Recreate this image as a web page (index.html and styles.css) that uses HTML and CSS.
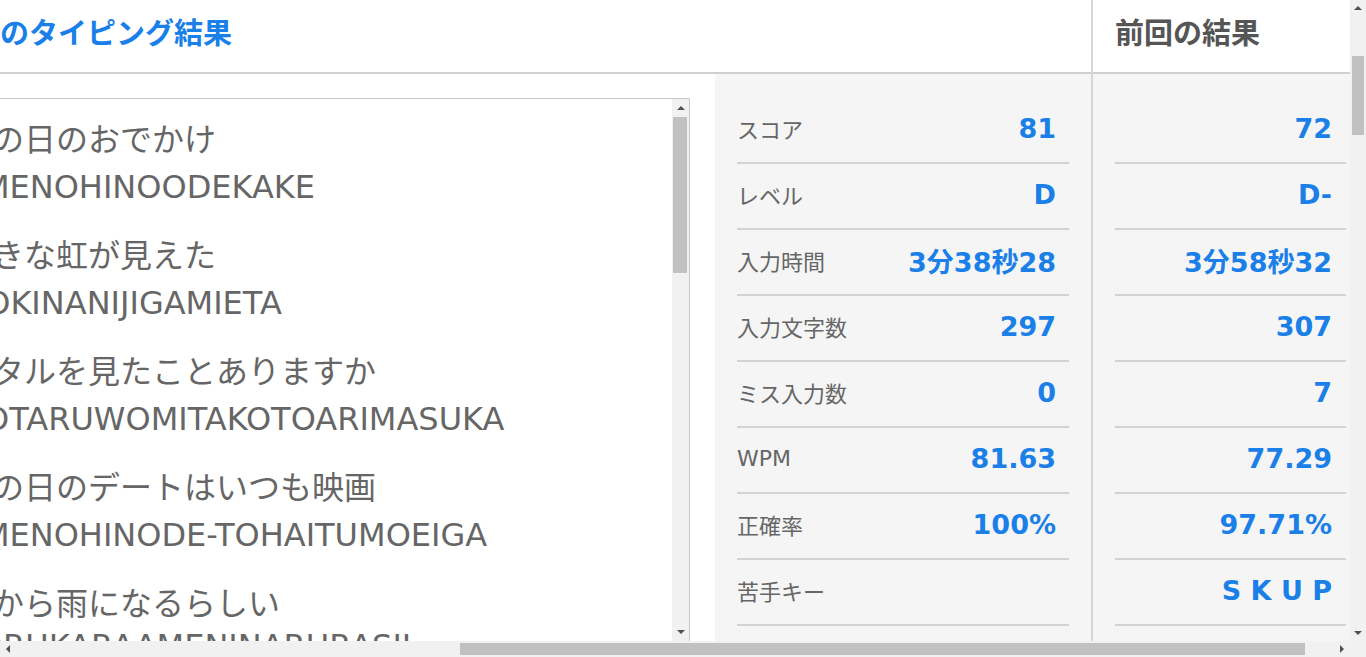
FILE: index.html
```html
<!DOCTYPE html>
<html>
  <head>
    <meta charset="UTF-8" />
    <title>タイピング結果</title>
    <link rel="stylesheet" href="styles.css">
  </head>

  <body>
    <div class="screen">
      <div class="viewport">
        <div class="result">
          <div class="today">
            <h2 class="col-title today-title">今日のタイピング結果</h2>
            <div class="today-body">
              <div class="sentence-wrap">
                <div class="sentence-box">
                  <div class="sentence-list">
                    <p class="sentence"><span class="kana">雨の日のおでかけ</span><span class="roma">AMENOHINOODEKAKE</span></p>
                    <p class="sentence"><span class="kana">大きな虹が見えた</span><span class="roma">OOKINANIJIGAMIETA</span></p>
                    <p class="sentence"><span class="kana">ホタルを見たことありますか</span><span class="roma">HOTARUWOMITAKOTOARIMASUKA</span></p>
                    <p class="sentence"><span class="kana">雨の日のデートはいつも映画</span><span class="roma">AMENOHINODE-TOHAITUMOEIGA</span></p>
                    <p class="sentence"><span class="kana">夜から雨になるらしい</span><span class="roma">YORUKARAAMENINARURASII</span></p>
                    <p class="sentence"><span class="kana">夏休みの宿題</span><span class="roma">NATUYASUMINOSYUKUDAI</span></p>
                  </div>
                  <div class="sb sb-v sb-box">
                    <span class="sb-btn"><i class="arrow arrow-up"></i></span>
                    <span class="sb-track"><span class="sb-thumb"></span></span>
                    <span class="sb-btn"><i class="arrow arrow-down"></i></span>
                  </div>
                </div>
              </div>
              <ul class="stats">
                <li class="stat"><span class="stat-label">スコア</span><span class="stat-value">81</span></li>
                <li class="stat"><span class="stat-label">レベル</span><span class="stat-value">D</span></li>
                <li class="stat"><span class="stat-label">入力時間</span><span class="stat-value">3分38秒28</span></li>
                <li class="stat"><span class="stat-label">入力文字数</span><span class="stat-value">297</span></li>
                <li class="stat"><span class="stat-label">ミス入力数</span><span class="stat-value">0</span></li>
                <li class="stat"><span class="stat-label">WPM</span><span class="stat-value">81.63</span></li>
                <li class="stat"><span class="stat-label">正確率</span><span class="stat-value">100%</span></li>
                <li class="stat"><span class="stat-label">苦手キー</span><span class="stat-value"></span></li>
                <li class="stat"><span class="stat-label">苦手な文字</span><span class="stat-value"></span></li>
              </ul>
            </div>
          </div>
          <div class="prev">
            <h2 class="col-title prev-title">前回の結果</h2>
            <ul class="stats">
              <li class="stat"><span class="stat-value">72</span></li>
              <li class="stat"><span class="stat-value">D-</span></li>
              <li class="stat"><span class="stat-value">3分58秒32</span></li>
              <li class="stat"><span class="stat-value">307</span></li>
              <li class="stat"><span class="stat-value">7</span></li>
              <li class="stat"><span class="stat-value">77.29</span></li>
              <li class="stat"><span class="stat-value">97.71%</span></li>
              <li class="stat"><span class="stat-value">S K U P</span></li>
              <li class="stat"><span class="stat-value"></span></li>
            </ul>
          </div>
        </div>
      </div>

      <!-- ページのスクロールバー -->
      <div class="sb sb-v sb-page">
        <span class="sb-btn"><i class="arrow arrow-up"></i></span>
        <span class="sb-track"><span class="sb-thumb"></span></span>
        <span class="sb-btn"><i class="arrow arrow-down"></i></span>
      </div>
      <div class="sb sb-h sb-page">
        <span class="sb-btn"><i class="arrow arrow-left"></i></span>
        <span class="sb-track"><span class="sb-thumb"></span></span>
        <span class="sb-btn"><i class="arrow arrow-right"></i></span>
      </div>
      <div class="sb-corner"></div>
    </div>
  </body>
</html>
```

FILE: styles.css
```css
html,
body {
  margin: 0;
  overflow: hidden;
}

body {
  font-family: "DejaVu Sans", "Noto Sans CJK JP", sans-serif;
  color: #666;
  background: #fff;
}

.screen {
  display: grid;
  grid-template-columns: 1350px 16px;
  grid-template-rows: 641px 16px;
}

.viewport {
  overflow: hidden;
}

.result {
  display: flex;
  margin-left: -78px;
  width: 1446px;
}

.today {
  width: 1171px;
  flex: none;
  box-sizing: border-box;
  border-right: 2px solid #d6d6d6;
}

.col-title {
  margin: 0;
  height: 74px;
  box-sizing: border-box;
  line-height: 62px;
  font-size: 29px;
  font-weight: bold;
  font-family: "Noto Sans CJK JP", sans-serif;
  border-bottom: 2px solid #d0d0d0;
}

.today-title {
  padding-left: 20px;
  color: #1a7fe8;
}

.prev-title {
  padding-left: 22px;
  color: #555;
}

.today-body {
  display: flex;
}

.sentence-wrap {
  width: 793px;
  box-sizing: border-box;
  padding: 24px 25px 0 18px;
}

.sentence-box {
  display: flex;
  height: 544px;
  box-sizing: border-box;
  border: 1px solid #c8c8c8;
}

.sentence-list {
  flex: 1;
  overflow: hidden;
  padding: 18px 0 0 19px;
}

.sentence {
  margin: 0 0 22px;
  font-size: 32px;
  line-height: 47px;
  white-space: nowrap;
}

.kana,
.roma {
  display: block;
}

.sentence:nth-child(n + 5) .roma {
  line-height: 36px;
}

.stats {
  list-style: none;
  margin: 0;
  padding: 24px 22px 22px;
  background: #f5f5f5;
  box-sizing: border-box;
}

.today-body .stats {
  width: 376px;
  flex: none;
}

.stat {
  display: flex;
  justify-content: space-between;
  align-items: center;
  height: 66px;
  box-sizing: border-box;
  border-bottom: 2px solid #d3d3d3;
  padding: 0 13px 4px 0;
}

.prev .stat {
  justify-content: flex-end;
  padding-right: 14px;
}

.stat-label {
  font-size: 22px;
  font-family: "DejaVu Sans", "Noto Sans CJK JP", sans-serif;
  color: #666;
}

.stat-value {
  font-size: 27px;
  font-weight: bold;
  font-family: "DejaVu Sans", "Noto Sans CJK JP", sans-serif;
  color: #1a80e8;
}

.prev {
  width: 275px;
  flex: none;
}

/* scrollbars */
.sb {
  display: flex;
  background: #f1f1f1;
}

.sb-v {
  flex-direction: column;
}

.sb-btn {
  display: flex;
  align-items: center;
  justify-content: center;
  flex: none;
  width: 16px;
  height: 16px;
}

.sb-track {
  flex: 1;
  display: flex;
}

.sb-v .sb-track {
  flex-direction: column;
}

.sb-thumb {
  background: #c1c1c1;
}

.sb-page.sb-v .sb-thumb {
  margin: 40px 2px 0;
  height: 79px;
}

.sb-page.sb-h .sb-thumb {
  margin: 2px 0 2px 444px;
  width: 845px;
}

.sb-box {
  width: 17px;
  flex: none;
}

.sb-box .sb-btn {
  width: 17px;
  height: 18px;
}

.sb-box .sb-thumb {
  margin: 0 2px 0 1px;
  height: 156px;
}

.sb-corner {
  background: #f1f1f1;
}

.arrow {
  width: 0;
  height: 0;
  border: 4px solid transparent;
}

.arrow-up {
  border-top: none;
  border-bottom-color: #505050;
}

.arrow-down {
  border-bottom: none;
  border-top-color: #505050;
}

.arrow-left {
  border-left: none;
  border-right-color: #505050;
}

.arrow-right {
  border-right: none;
  border-left-color: #505050;
}
```
